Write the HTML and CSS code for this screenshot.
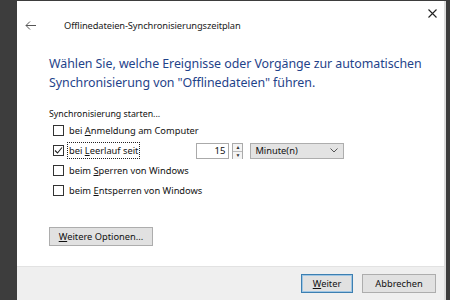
FILE: index.html
```html
<!DOCTYPE html>
<html lang="de">
<head>
<meta charset="utf-8">
<link rel="stylesheet" href="styles.css">
</head>
<body>
<div class="dialog">
  <div class="titlebar">
    <svg class="back" width="11" height="9" viewBox="0 0 11 9"><path d="M5 0.5 L1 4.5 L5 8.5 M1 4.5 H11" fill="none" stroke="#555" stroke-width="1"/></svg>
    <span class="title">Offlinedateien-Synchronisierungszeitplan</span>
    <svg class="close" width="9" height="9" viewBox="0 0 9 9"><path d="M0.5 0.5 L8.5 8.5 M8.5 0.5 L0.5 8.5" stroke="#222" stroke-width="1.1"/></svg>
  </div>
  <div class="content">
    <h1 class="instruction">Wählen Sie, welche Ereignisse oder Vorgänge zur automatischen Synchronisierung von "Offlinedateien" führen.</h1>
    <p class="label">Synchronisierung starten...</p>
    <div class="options">
      <div class="row"><span class="cb"></span><span class="text">bei <u>A</u>nmeldung am Computer</span></div>
      <div class="row">
        <span class="cb checked"><svg width="9" height="9" viewBox="0 0 9 9"><path d="M1 4.5 L3.5 7 L8 1.5" fill="none" stroke="#222" stroke-width="1.1"/></svg></span><span class="text focus">bei <u>L</u>eerlauf seit</span>
        <div class="spin">
          <span class="spin-input">15</span>
          <span class="spin-btns"><span class="sb">▲</span><span class="sb">▼</span></span>
        </div>
        <div class="select"><span>Minute(n)</span><svg width="8" height="5" viewBox="0 0 8 5"><path d="M0.5 0.5 L4 4 L7.5 0.5" fill="none" stroke="#555" stroke-width="1"/></svg></div>
      </div>
      <div class="row"><span class="cb"></span><span class="text">beim <u>S</u>perren von Windows</span></div>
      <div class="row"><span class="cb"></span><span class="text">beim <u>E</u>ntsperren von Windows</span></div>
    </div>
    <button class="btn more"><u>W</u>eitere Optionen...</button>
  </div>
  <div class="footer">
    <button class="btn primary"><u>W</u>eiter</button>
    <button class="btn">Abbrechen</button>
  </div>
</div>
</body>
</html>
```

FILE: styles.css
```css
html, body {
  margin: 0;
  padding: 0;
  background: #3d3d3d;
  width: 450px;
  height: 300px;
  overflow: hidden;
  font-family: "Noto Sans", "Open Sans", sans-serif;
}
.dialog {
  margin-left: 17px;
  margin-top: 1px;
  width: 427px;
  height: 299px;
  background: #fff;
  border-right: 2px solid #dcdcdc;
  display: flex;
  flex-direction: column;
  box-sizing: content-box;
}
.titlebar {
  height: 46px;
  display: flex;
  align-items: center;
  position: relative;
  padding-top: 2px;
  box-sizing: border-box;
}
.back {
  margin-left: 8px;
  margin-right: 28px;
}
.title {
  font-size: 9.3px;
  color: #1a1a1a;
  letter-spacing: -0.1px;
}
.close {
  position: absolute;
  right: 7px;
  top: 8px;
}
.content {
  flex: 1;
  padding-left: 32px;
  display: flex;
  flex-direction: column;
  align-items: flex-start;
}
.instruction {
  margin: 7px 0 0 0;
  font-weight: normal;
  font-size: 12.4px;
  line-height: 19px;
  color: #1f438a;
  width: 385px;
  letter-spacing: -0.05px;
}
.label {
  margin: 16px 0 0 0;
  font-size: 8.8px;
  color: #111;
  line-height: 12px;
}
.options {
  margin-top: 2px;
  margin-left: 4px;
  display: flex;
  flex-direction: column;
  gap: 3px;
}
.row {
  height: 17px;
  display: flex;
  align-items: center;
  font-size: 9.3px;
  color: #111;
}
.cb {
  width: 9px;
  height: 9px;
  border: 1px solid #333;
  margin-right: 3px;
  display: flex;
  align-items: center;
  justify-content: center;
  background: #fff;
}
.text {
  padding: 1px 1px;
  border: 1px dotted transparent;
}
.text.focus {
  border-color: #222;
}
.spin {
  display: flex;
  margin-left: 56px;
  height: 16px;
}
.spin-input {
  width: 28px;
  height: 14px;
  border: 1px solid #aaa;
  text-align: right;
  padding-right: 3px;
  font-size: 9.5px;
  line-height: 14px;
  box-sizing: content-box;
}
.spin-btns {
  display: flex;
  flex-direction: column;
  margin-left: 3px;
  border: 1px solid #aaa;
  width: 9px;
}
.sb {
  flex: 1;
  font-size: 5px;
  line-height: 7px;
  text-align: center;
  color: #333;
  background: #f4f4f4;
}
.sb + .sb {
  border-top: 1px solid #bbb;
}
.select {
  margin-left: 7px;
  width: 94px;
  height: 16px;
  box-sizing: border-box;
  border: 1px solid #adadad;
  background: #e3e3e3;
  display: flex;
  align-items: center;
  justify-content: space-between;
  padding: 0 5px 0 4px;
  font-size: 9.3px;
  color: #111;
}
.btn {
  font-family: "Noto Sans", "Open Sans", sans-serif;
  font-size: 9.3px;
  color: #111;
  background: #e1e1e1;
  border: 1px solid #adadad;
  padding: 0;
  height: 19px;
}
.more {
  margin-top: 28px;
  width: 104px;
}
.footer {
  height: 34px;
  margin-top: auto;
  background: #efefef;
  border-top: 1px solid #e2e2e2;
  display: flex;
  justify-content: flex-end;
  align-items: center;
  gap: 9px;
  padding-right: 8px;
  box-sizing: border-box;
}
.footer .btn {
  width: 74px;
}
.footer .primary {
  width: 52px;
  border-color: #3c7fb1;
  box-shadow: inset 0 0 0 1px #9fc6e4;
}
```
